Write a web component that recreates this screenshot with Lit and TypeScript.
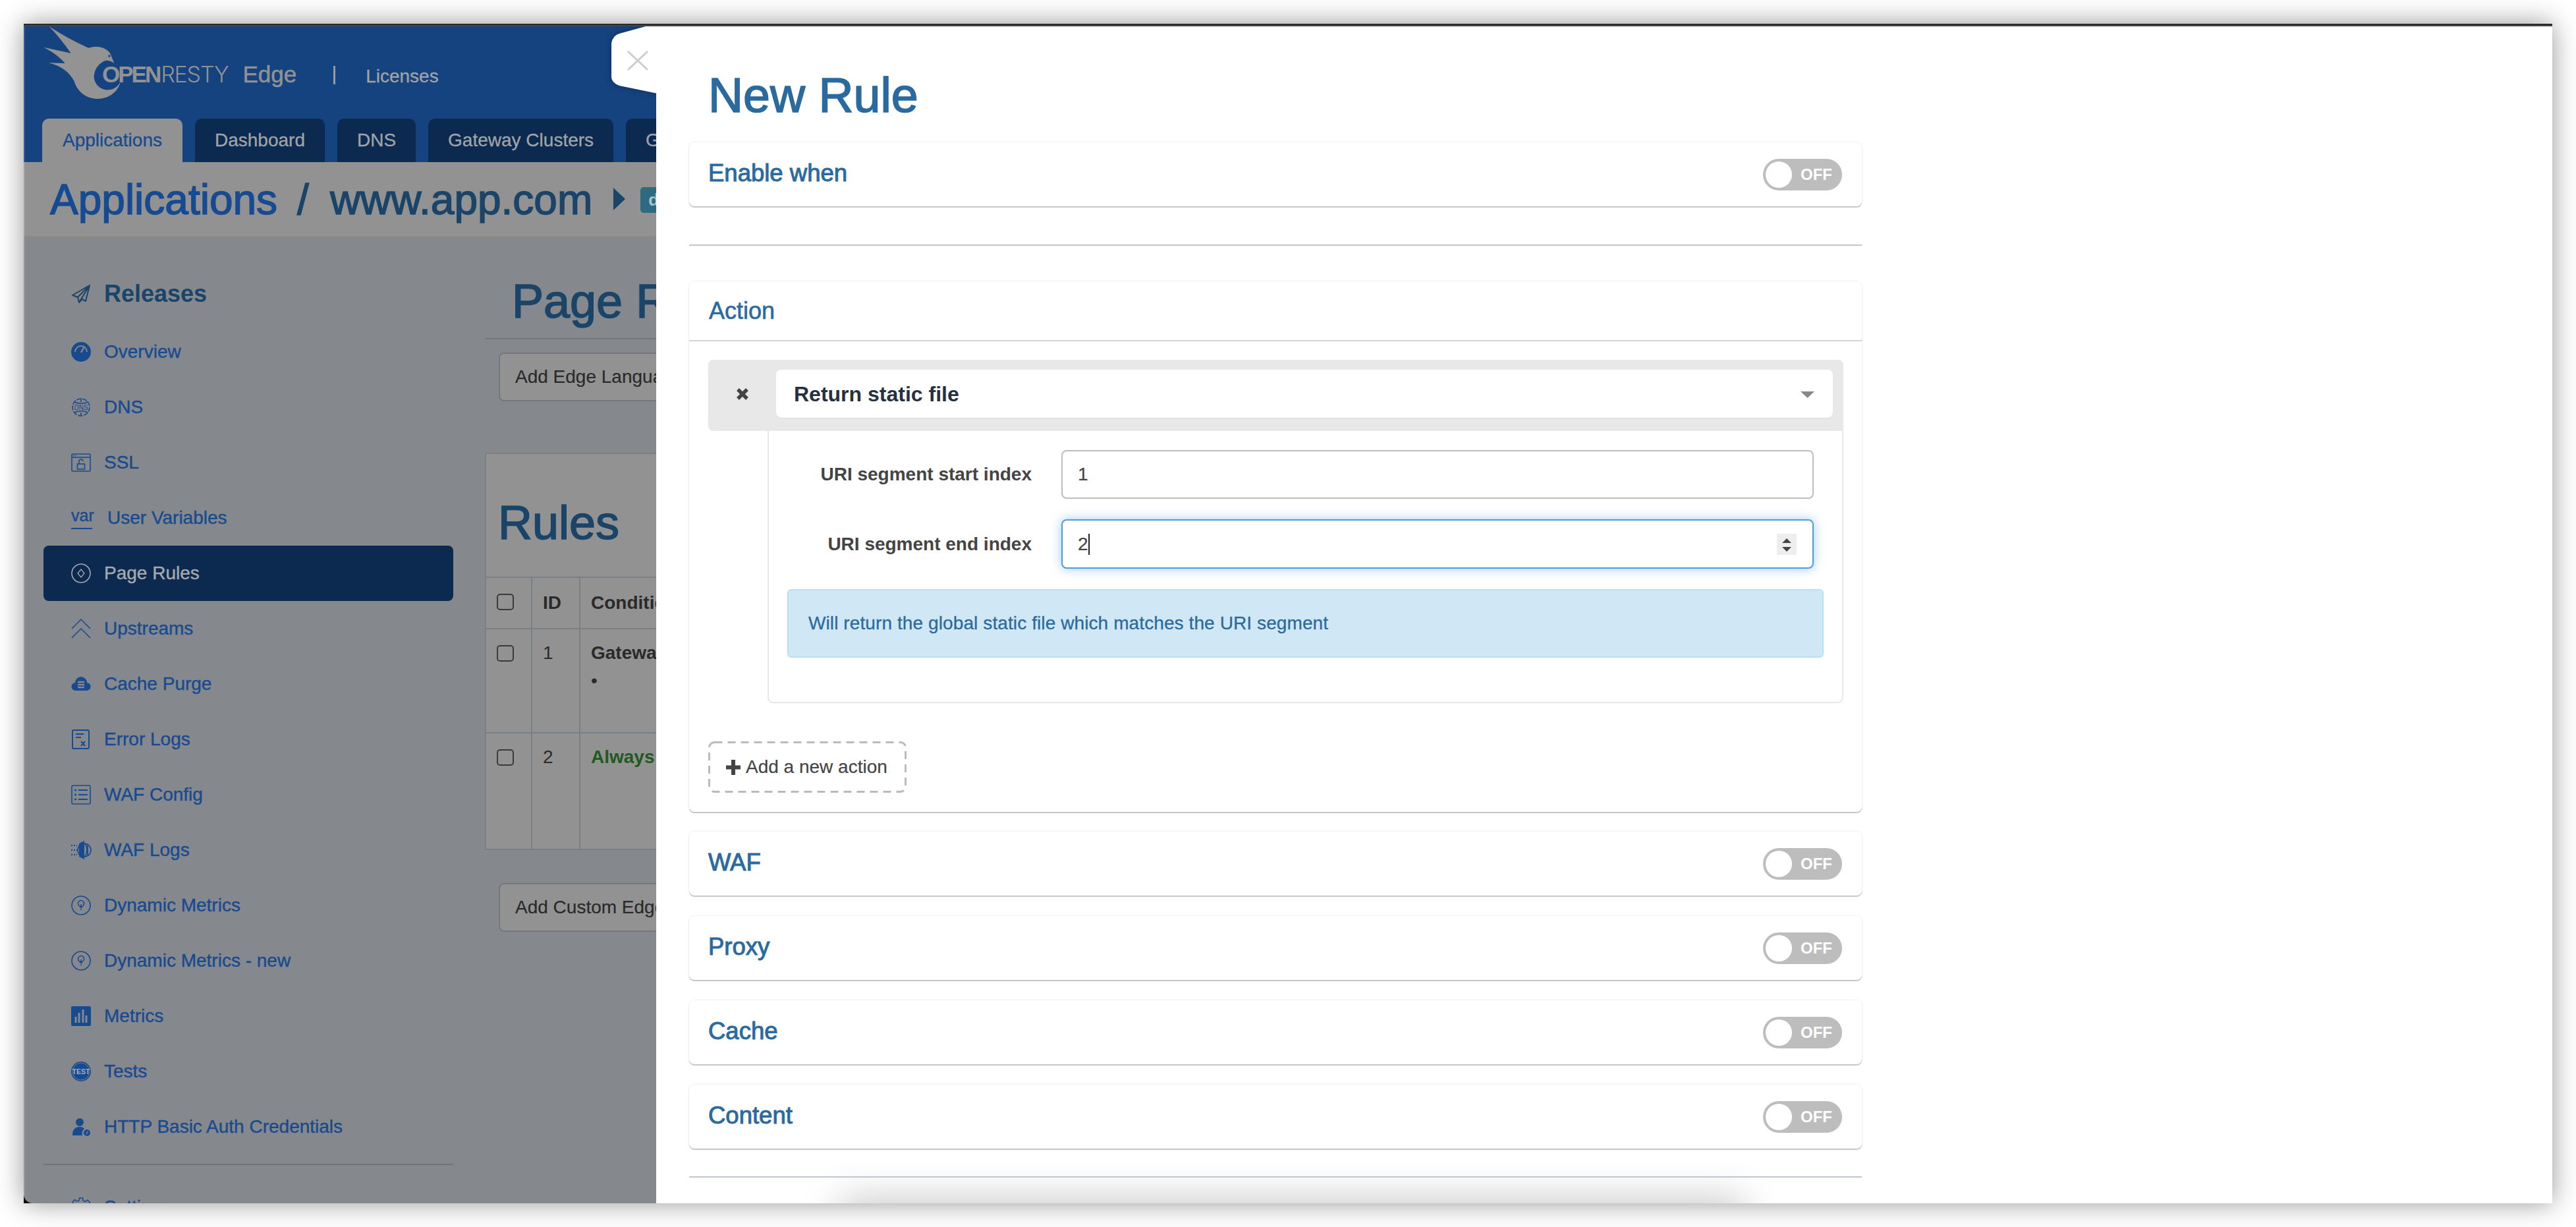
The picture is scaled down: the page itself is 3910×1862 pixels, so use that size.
import { LitElement, html, svg, css } from "lit";
import { customElement } from "lit/decorators.js";

const ic = (body: unknown, cls = "") => html`<svg class="ic ${cls}" viewBox="0 0 30 30" fill="none" stroke="currentColor" stroke-width="1.6">${body}</svg>`;

const ICONS: Record<string, unknown> = {
  plane: ic(svg`<path d="M28 2 2 17l8 3 2 8 4.5-5 5.5 3z M28 2 10 20 M28 2 12 28" stroke-width="2" stroke-linejoin="round"/>`),
  gauge: ic(svg`<circle cx="15" cy="15" r="15" fill="currentColor" stroke="none"/><path d="M6 15a9 9 0 0 1 18 0" stroke="#85888c" stroke-width="2"/><path d="M15 16 20 7" stroke="#85888c" stroke-width="2.4"/>`),
  dns: ic(svg`<circle cx="15" cy="15" r="13" stroke-dasharray="7 2"/><path d="M15 2v5M15 23v5M5 7c5 3 15 3 20 0M5 23c5-3 15-3 20 0"/><text x="15" y="19" font-size="10" text-anchor="middle" fill="currentColor" stroke="none" font-family="Liberation Sans">DNS</text>`),
  ssl: ic(svg`<rect x="1" y="2" width="28" height="26" rx="1"/><path d="M1 7h28"/><path d="M3 4.5h5" stroke-dasharray="1.5 1.5"/><rect x="9.5" y="17" width="11" height="8"/><path d="M12 17v-4a3 3 0 0 1 6 0"/>`),
  target: ic(svg`<circle cx="15" cy="15" r="14"/><path d="M15 9l5 6-5 6-5-6z" stroke-width="1.3"/>`),
  up: ic(svg`<path d="M1 15 15 1l14 14M1 29l14-14 14 14" stroke-width="1.5"/>`),
  cloud: ic(svg`<path d="M7 25a6 6 0 0 1-1-12 9 9 0 0 1 18 0 6 6 0 0 1-1 12z" fill="currentColor" stroke="none"/><path d="M10 12h10M10 16h10M10 20h10" stroke="#85888c" stroke-width="2.4"/>`),
  doc: ic(svg`<rect x="2" y="1" width="25" height="28" rx="2" stroke-width="2"/><path d="M7 7h12M7 12h8M15 18l6 7M21 18l-6 7" stroke-width="2"/>`),
  list: ic(svg`<rect x="1" y="1" width="28" height="28" rx="2"/><path d="M11 8h14M11 15h14M11 22h14" stroke-width="1.8"/><path d="M5 8h3M5 15h3M5 22h3" stroke-width="2.4"/>`),
  waf: ic(svg`<path d="M12 5 20 1v28l-8-4z" fill="currentColor" stroke="none"/><circle cx="20" cy="15" r="10"/><path d="M20 5c5 3 5 17 0 20M25 7v16"/><path d="M0 8h9M0 15h9M0 22h9" stroke-dasharray="2 2" stroke-width="2"/>`),
  bulb: ic(svg`<circle cx="15" cy="15" r="14"/><circle cx="15" cy="12" r="4.5"/><path d="M13 18h4M14 21h2M15 13v5" stroke-width="1.4"/>`),
  bars: ic(svg`<rect width="30" height="30" rx="2" fill="currentColor" stroke="none"/><path d="M7 16v9M12 10v15M18 5v20M23 14v11" stroke="#85888c" stroke-width="3"/>`),
  test: ic(svg`<circle cx="15" cy="15" r="15" fill="currentColor" stroke="none"/><circle cx="15" cy="15" r="13" stroke="#85888c" stroke-width=".8"/><text x="15" y="19" font-size="10.5" font-weight="700" text-anchor="middle" fill="#a9adb2" stroke="none" font-family="Liberation Sans">TEST</text>`),
  user: ic(svg`<circle cx="13" cy="8" r="6" fill="currentColor" stroke="none"/><path d="M2 28c0-9 4-13 11-13 3 0 6 1 7 3-3 2-4 6-3 10z" fill="currentColor" stroke="none"/><circle cx="24" cy="24" r="5" fill="currentColor" stroke="none"/><path d="M25.5 21.5 23 26.5" stroke="#85888c" stroke-width="1.3"/>`),
  gear: ic(svg`<circle cx="15" cy="15" r="5"/><path d="M12.5 1h5l.8 4 3.2 1.4 3.5-2.2 3.5 3.5-2.2 3.5L27 14l3 .8v4.4l-3.7.8-1.3 3.2 2 3.5-3.5 3.3-3.5-2-3.2 1.3-.8 3.7h-4.4l-.8-3.7-3.2-1.3-3.5 2-3.5-3.3 2-3.5L3.7 20 0 19.2v-4.4L3 14l1.2-3.3L2 7.2l3.5-3.5L9 5.9 12 5z" stroke-width="1.5"/>`),
};

const NAV: [string, string][] = [
  ["gauge", "Overview"], ["dns", "DNS"], ["ssl", "SSL"], ["var", "User Variables"], ["target", "Page Rules"],
  ["up", "Upstreams"], ["cloud", "Cache Purge"], ["doc", "Error Logs"], ["list", "WAF Config"], ["waf", "WAF Logs"],
  ["bulb", "Dynamic Metrics"], ["bulb", "Dynamic Metrics - new"], ["bars", "Metrics"], ["test", "Tests"], ["user", "HTTP Basic Auth Credentials"],
];

const TABS = ["Applications", "Dashboard", "DNS", "Gateway Clusters", "Global Configs"];

@customElement("app-root")
export class AppRoot extends LitElement {
  static styles = css`
    :host { display: block; width: 3910px; height: 1862px; background: #fff; font-family: "Liberation Sans", Arial, sans-serif; overflow: hidden; }
    * { box-sizing: border-box; }
    .page { padding: 36px; height: 1862px; }
    .window { width: 3838px; height: 1790px; border-top: 2px solid #2b2b2b; box-shadow: 0 0 38px rgba(0,0,0,.42); background: #1a0a0e; }
    .stage { position: relative; height: 1788px; border-top: 2px solid #454545; overflow: hidden; }

    .app { position: relative; height: 1786px; width: 960px; overflow: hidden; border-bottom-left-radius: 14px; background: #85888c; }
    .app::after { content: ""; position: absolute; left: 0; top: 0; bottom: 0; width: 2px; background: rgba(255,255,255,.14); }

    .header { height: 206px; background: #15437f; display: flex; flex-direction: column; }
    .brand { height: 140px; display: flex; align-items: flex-start; padding-left: 30px; color: #929292; }
    .bird { width: 118px; height: 112px; flex: none; fill: #939393; }
    .word { margin: 53px 0 0 -29px; display: flex; font-size: 35px; line-height: 40px; white-space: nowrap; }
    .open { font-weight: 700; letter-spacing: -3px; }
    .resty { font-family: "Inter", "Liberation Sans", sans-serif; font-weight: 300; font-size: 34px; letter-spacing: -1.2px; margin-left: 2px; }
    .edge { margin: 53px 0 0 22px; font-size: 35px; line-height: 40px; -webkit-text-stroke: .5px #929292; }
    .sep { margin: 60px 0 0 56px; width: 3px; height: 28px; background: #9a9a9a; }
    .lic { margin: 56px 0 0 46px; font-size: 28px; line-height: 40px; color: #a3a3a3; -webkit-text-stroke: .3px #a3a3a3; }
    .tabs { height: 66px; display: flex; gap: 19px; padding-left: 28px; flex: none; }
    .tab { height: 66px; padding: 0 30px; border-radius: 10px 10px 0 0; background: #0c2a4f; color: #a0a4a8; font-size: 28px; display: flex; align-items: center; white-space: nowrap; -webkit-text-stroke: .3px currentColor; }
    .tab.on { padding: 0 31px; background: #929292; color: #164a92; }

    .band { height: 114px; background: #929292; border-bottom: 2px solid #8a8a8c; padding: 22px 0 0 40px; display: flex; align-items: flex-start; font-size: 64px; line-height: 70px; color: #1a4468; white-space: nowrap; -webkit-text-stroke: 1.5px currentColor; }
    .band .crumb { color: #164a92; }
    .band .slash { margin: 0 32px 0 30px; }
    .tri { width: 18px; height: 34px; margin: 17px 23px 0 32px; flex: none; fill: #1a4468; }
    .badge { margin-top: 16px; width: 60px; height: 39px; border-radius: 5px; background: #2e6b80; color: #a8c4cc; font-size: 26px; line-height: 39px; padding-left: 12px; font-weight: 700; -webkit-text-stroke: 0; }

    .body { display: flex; }
    .side { width: 700px; flex: none; padding: 44px 48px 0 30px; }
    .item { height: 84px; display: flex; align-items: center; padding-left: 42px; gap: 20px; font-size: 28px; color: #184a90; border-radius: 8px; white-space: nowrap; -webkit-text-stroke: .4px currentColor; }
    .item.head { font-size: 36px; font-weight: 700; color: #1a4468; margin-bottom: 4px; -webkit-text-stroke: 0; }
    .item.on { background: #0c2a4f; color: #a6a9ad; }
    .ic { width: 30px; height: 30px; flex: none; overflow: visible; -webkit-text-stroke: 0; }
    .var { width: 32px; flex: none; font-size: 25px; line-height: 26px; border-bottom: 2px solid currentColor; padding-bottom: 6px; margin-right: 3px; }
    .side hr { border: 0; height: 2px; background: #6f7479; margin: 14px 0 22px; }

    .main { width: 260px; flex: none; }
    .h1 { font-size: 72px; line-height: 80px; color: #1a4468; white-space: nowrap; -webkit-text-stroke: 1.6px currentColor; }
    .ptitle { padding: 57px 0 16px 41px; border-bottom: 2px solid #72777d; }
    .btn { display: flex; align-items: center; width: 500px; height: 74px; margin-left: 21px; padding-left: 23px; border: 2px solid #74787c; border-radius: 8px; background: #929292; color: #2a2a2a; font-size: 28px; white-space: nowrap; -webkit-text-stroke: .2px currentColor; }
    .btn.a { margin-top: 20px; }
    .btn.b { margin-top: 50px; }
    .box { margin-top: 78px; border: 2px solid #7a7f85; border-right: 0; background: #929292; }
    .rtitle { padding: 64px 0 42px 18px; }
    .grid { display: grid; grid-template-columns: 70px 73px 1fr; font-size: 28px; line-height: 40px; color: #2a2a2a; white-space: nowrap; }
    .c { border-top: 2px solid #7a7f85; border-right: 2px solid #7a7f85; padding: 16px 0 0 16px; }
    .c.hd { height: 78px; padding-top: 18px; font-weight: 700; }
    .c.r1 { height: 158px; }
    .c.r2 { height: 177px; }
    .c.first { padding: 24px 0 0 16px; }
    .chk { width: 26px; height: 25px; border: 2px solid #3a3a3a; border-radius: 5px; }
    .c b.g { color: #1f5a1f; }
    .dot { margin-top: 2px; font-size: 28px; }

    .tabclose { position: absolute; left: 892px; top: 0; width: 80px; height: 110px; overflow: visible; filter: drop-shadow(0 0 5px rgba(10,30,60,.6)); }
    .tabclose .fill { fill: #fff; }
    .tabclose .x { stroke: #cdcdcd; stroke-width: 3; fill: none; }

    .drawer { position: absolute; left: 960px; top: 0; right: 0; height: 1786px; background: #fff; padding: 65px 0 0 50px; overflow: hidden; }
    .dock { position: absolute; left: 300px; top: 1800px; width: 1330px; height: 40px; box-shadow: 0 0 60px 20px rgba(0,0,0,.22); }
    .wrap { width: 1780px; position: relative; z-index: 1; }
    .dtitle { font-size: 73.5px; color: #2a6a9e; padding-left: 29px; margin-bottom: 31px; }
    .card { background: #fff; border-radius: 8px; box-shadow: 0 2px 1px rgba(0,0,0,.2), 0 0 3px rgba(0,0,0,.12); }
    .cardhead { height: 97px; display: flex; align-items: center; justify-content: space-between; padding: 0 30px 0 29px; font-size: 36.5px; color: #2a6a9e; }
    .cardhead > span { padding-bottom: 4px; -webkit-text-stroke: 1px currentColor; }
    .stack { display: flex; flex-direction: column; gap: 31px; margin-top: 30px; }
    .toggle { width: 120px; height: 48px; border-radius: 24px; background: #bdbdbd; padding: 4px; display: flex; align-items: center; }
    .knob { width: 40px; height: 40px; border-radius: 50%; background: #fff; }
    .off { margin-left: 13px; font-size: 24px; font-weight: 700; color: #fff; }
    .rule { height: 2px; background: #bcc8d0; }
    .rule.top { margin: 58px 0 54px; }
    .rule.bot { margin-top: 42px; }

    .actionhead { height: 91px; border-bottom: 2px solid #d0d4d7; display: flex; align-items: center; padding-left: 30px; font-size: 36px; color: #2a6a9e; -webkit-text-stroke: .6px currentColor; }
    .actionbody { padding: 28px 28px 29px 29px; }
    .sel { height: 108px; background: #e8e8e8; border-radius: 8px 8px 0 8px; padding: 15px 16px 20px 0; display: flex; }
    .selx { width: 103px; flex: none; display: flex; align-items: center; justify-content: center; }
    .selx svg { width: 20px; height: 18px; stroke: #444; stroke-width: 5.5; }
    .selbox { flex: 1; height: 73px; background: #fff; border-radius: 8px; box-shadow: 0 1px 1px rgba(0,0,0,.06); display: flex; align-items: center; justify-content: space-between; padding: 2px 28px 0 27px; font-size: 32px; font-weight: 700; color: #26303e; }
    .caret { width: 21px; height: 10px; fill: #888; }
    .detail { margin-left: 90px; border: 2px solid #e8e8e8; border-top: 0; border-radius: 0 0 8px 8px; padding: 29px 28px 67px 28px; }
    .row { display: grid; grid-template-columns: 371px 1142px; column-gap: 45px; align-items: center; margin-bottom: 31px; }
    .row label { text-align: right; font-size: 28px; font-weight: 700; color: #444; }
    .input { height: 74px; border: 2px solid #bdbdbd; border-radius: 8px; padding-left: 23px; display: flex; align-items: center; font-size: 28px; color: #444; background: #fff; position: relative; -webkit-text-stroke: .2px currentColor; }
    .input.focus { height: 75px; border-color: #4f9be6; box-shadow: 0 0 16px rgba(80,160,240,.55); }
    .cursor { width: 2px; height: 32px; background: #222; }
    .spin { position: absolute; right: 24px; top: 20px; width: 30px; height: 32px; background: #eee; }
    .spin svg { width: 30px; height: 32px; fill: #444; display: block; }
    .alert { height: 104px; background: #d0e8f5; border: 2px solid #b6e2f0; border-radius: 6px; padding-left: 30px; display: flex; align-items: center; font-size: 28px; letter-spacing: .1px; color: #2a6a9e; -webkit-text-stroke: .3px currentColor; }
    .add { position: relative; margin-top: 58px; width: 301px; height: 78px; display: flex; align-items: center; padding-left: 27px; gap: 8px; font-size: 28px; color: #444; -webkit-text-stroke: .2px currentColor; }
    .add .plus { width: 22px; height: 23px; fill: #444; }
    .add .dash { position: absolute; left: 0; top: 0; width: 301px; height: 78px; fill: none; stroke: #bbb; stroke-width: 3; stroke-dasharray: 12 8; }
  `;

  private navItem(icon: string, label: string) {
    const on = label === "Page Rules";
    const glyph = icon === "var" ? html`<span class="var">var</span>` : ICONS[icon];
    return html`<div class="item ${on ? "on" : ""}">${glyph}<span>${label}</span></div>`;
  }

  private toggleCard(label: string) {
    return html`<div class="card cardhead"><span>${label}</span><div class="toggle"><div class="knob"></div><span class="off">OFF</span></div></div>`;
  }

  render() {
    return html`<div class="page"><div class="window"><div class="stage">
      <div class="app">
        <div class="header">
          <div class="brand">
            <svg class="bird" viewBox="110 60 354 336"><path d="M135 60C190 95 250 130 315 158 345 150 390 148 415 185L432 228C420 218 405 215 395 215 360 225 340 260 340 290 342 330 380 355 415 348 435 345 450 330 460 315 450 355 410 390 355 390 300 390 260 350 250 310 225 265 190 240 133 226L208 228C180 195 145 172 110 155L235 182C205 140 170 95 135 60Z"/><circle cx="410" cy="195" r="5" fill="#15437f"/></svg>
            <div class="word"><span class="open">OPEN</span><span class="resty">RESTY</span></div>
            <div class="edge">Edge</div>
            <div class="sep"></div>
            <div class="lic">Licenses</div>
          </div>
          <div class="tabs">${TABS.map((t, i) => html`<div class="tab ${i === 0 ? "on" : ""}">${t}</div>`)}</div>
        </div>
        <div class="band">
          <span class="crumb">Applications</span><span class="slash">/</span><span>www.app.com</span>
          <svg class="tri" viewBox="0 0 18 34"><path d="M0 0 18 17 0 34z"/></svg>
          <div class="badge">dev</div>
        </div>
        <div class="body">
          <div class="side">
            <div class="item head">${ICONS.plane}<span>Releases</span></div>
            ${NAV.map(([i, l]) => this.navItem(i, l))}
            <hr />
            ${this.navItem("gear", "Settings")}
          </div>
          <div class="main">
            <div class="h1 ptitle">Page Rules</div>
            <div class="btn a">Add Edge Language Rule</div>
            <div class="box">
              <div class="h1 rtitle">Rules</div>
              <div class="grid">
                <div class="c hd first"><div class="chk"></div></div><div class="c hd">ID</div><div class="c hd">Conditions</div>
                <div class="c r1 first"><div class="chk"></div></div><div class="c r1">1</div><div class="c r1"><b>Gateway Cluster</b><div class="dot">•</div></div>
                <div class="c r2 first"><div class="chk"></div></div><div class="c r2">2</div><div class="c r2"><b class="g">Always</b></div>
              </div>
            </div>
            <div class="btn b">Add Custom Edge Rule</div>
          </div>
        </div>
      </div>

      <svg class="tabclose" viewBox="0 0 80 110">
        <path class="fill" d="M80 0H52L12 11C4 14 0 20 0 28V76C0 82 4 87 12 90L80 104Z"/>
        <path class="x" d="M25 38 55 66M55 38 25 66"/>
      </svg>

      <div class="drawer">
        <div class="wrap">
          <div class="h1 dtitle">New Rule</div>
          ${this.toggleCard("Enable when")}
          <div class="rule top"></div>
          <div class="card">
            <div class="actionhead">Action</div>
            <div class="actionbody">
              <div class="sel">
                <div class="selx"><svg viewBox="0 0 20 18"><path d="M3 2 17 16M17 2 3 16"/></svg></div>
                <div class="selbox"><span>Return static file</span><svg class="caret" viewBox="0 0 21 10"><path d="M0 0H21L10.5 10Z"/></svg></div>
              </div>
              <div class="detail">
                <div class="row"><label>URI segment start index</label><div class="input">1</div></div>
                <div class="row"><label>URI segment end index</label><div class="input focus"><span>2</span><span class="cursor"></span>
                  <div class="spin"><svg viewBox="0 0 30 32"><path d="M8 14 15 7 22 14ZM8 20H22L15 27Z"/></svg></div></div></div>
                <div class="alert">Will return the global static file which matches the URI segment</div>
              </div>
              <div class="add">
                <svg class="dash" viewBox="0 0 301 78"><rect x="1.5" y="1.5" width="298" height="75" rx="8"/></svg>
                <svg class="plus" viewBox="0 0 22 23"><path d="M8 0h6v8.5h8v6h-8V23H8v-8.5H0v-6h8z"/></svg><span>Add a new action</span>
              </div>
            </div>
          </div>
          <div class="stack">
            ${["WAF", "Proxy", "Cache", "Content"].map((l) => this.toggleCard(l))}
          </div>
          <div class="rule bot"></div>
        </div>
        <div class="dock"></div>
      </div>
    </div></div></div>`;
  }
}
